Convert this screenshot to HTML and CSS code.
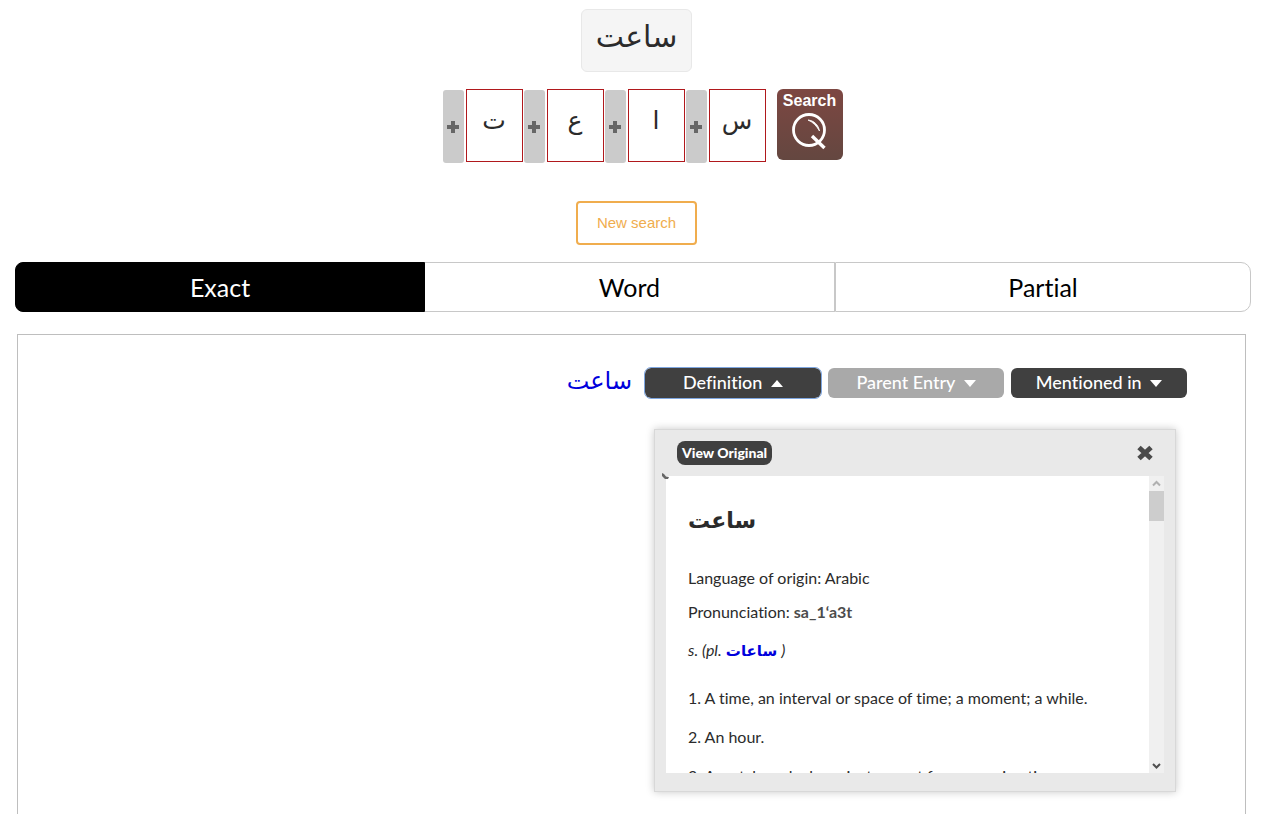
FILE: index.html
```
<!DOCTYPE html>
<html lang="en">
<head>
<meta charset="utf-8">
<title>Dictionary search</title>
<link rel="stylesheet" href="styles.css">
</head>
<body>
<header class="search">
  <h1 class="search-word" lang="ur" dir="rtl">ساعت</h1>
  <form class="letters">
    <button class="plus" type="button" aria-label="Add letter at end"><svg width="12" height="12" viewBox="0 0 12 12"><path d="M6 0v12M0 6h12"/></svg></button>
    <input class="letter" type="text" dir="rtl" aria-label="Letter 4" value="ت">
    <button class="plus" type="button" aria-label="Add letter before 4"><svg width="12" height="12" viewBox="0 0 12 12"><path d="M6 0v12M0 6h12"/></svg></button>
    <input class="letter" type="text" dir="rtl" aria-label="Letter 3" value="ع">
    <button class="plus" type="button" aria-label="Add letter before 3"><svg width="12" height="12" viewBox="0 0 12 12"><path d="M6 0v12M0 6h12"/></svg></button>
    <input class="letter" type="text" dir="rtl" aria-label="Letter 2" value="ا">
    <button class="plus" type="button" aria-label="Add letter before 2"><svg width="12" height="12" viewBox="0 0 12 12"><path d="M6 0v12M0 6h12"/></svg></button>
    <input class="letter" type="text" dir="rtl" aria-label="Letter 1" value="س">
    <button class="go" type="button">
      <span>Search</span>
      <svg width="38" height="40" viewBox="0 0 38 40" fill="none" stroke="#fff"><circle cx="18" cy="20" r="15.500" stroke-width="2.800"/><path d="M21 26 33.500 38" stroke-width="3.400"/><path d="M17 10c6 .5 10.500 5 11.500 11-3-5-6-8.500-11.500-11z" fill="#fff" stroke-width=".8"/></svg>
    </button>
  </form>
  <button class="new-search" type="button">New search</button>
</header>
<main>
  <nav class="tabs">
    <button class="tab tab-active" type="button">Exact</button>
    <button class="tab" type="button">Word</button>
    <button class="tab" type="button">Partial</button>
  </nav>
  <section class="results">
    <div class="entry">
      <a class="entry-word" href="#" lang="ur" dir="rtl">ساعت</a>
      <button class="action action-open" type="button">Definition <svg width="12" height="7" viewBox="0 0 12 7"><path d="M0 7 6 0l6 7z"/></svg></button>
      <button class="action action-off" type="button">Parent Entry <svg width="12" height="7" viewBox="0 0 12 7"><path d="M0 0h12L6 7z"/></svg></button>
      <button class="action" type="button">Mentioned in <svg width="12" height="7" viewBox="0 0 12 7"><path d="M0 0h12L6 7z"/></svg></button>
    </div>
    <article class="popup">
      <div class="popup-head">
        <button class="original" type="button">View Original</button>
        <button class="close" type="button" aria-label="Close"><svg width="16" height="16" viewBox="0 0 16 16"><path d="M2 2.500l12 11M14 2.500l-12 11"/></svg></button>
      </div>
      <div class="frame">
        <svg class="notch" width="8" height="7" viewBox="0 0 8 7"><path d="M0 0 2 1 4 3.500 7 4 6 6H3L0 3z"/></svg>
        <div class="definition">
          <h2 class="headword" lang="ur"><bdi>ساعت</bdi></h2>
          <p class="line">Language of origin: Arabic</p>
          <p class="line">Pronunciation: <b class="sound">sa_1‘a3t</b></p>
          <p class="grammar"><i>s. (pl.</i> <a class="plural" href="#" lang="ur"><bdi>ساعات</bdi></a> <i>)</i></p>
          <p class="sense">1. A time, an interval or space of time; a moment; a while.</p>
          <p class="sense">2. An hour.</p>
          <p class="sense">3. A watch, a clock; an instrument for measuring time.</p>
        </div>
        <div class="scroll" aria-hidden="true">
          <svg class="arrow-up" width="15" height="15" viewBox="0 0 15 15"><path d="M4 9.500 7.500 6 11 9.500"/></svg>
          <div class="thumb"></div>
          <svg class="arrow-down" width="15" height="15" viewBox="0 0 15 15"><path d="M4 6 7.500 9.500 11 6"/></svg>
        </div>
      </div>
    </article>
  </section>
</main>
</body>
</html>
```
FILE: styles.css
```
* { box-sizing: border-box; }
html { height: 100%; }
body {
  height: 100%;
  margin: 0;
  padding: 9px 16px 0 15px;
  display: flex;
  flex-direction: column;
  overflow: hidden;
  background: #fff;
  color: #2b2b2b;
  font-family: Lato, "DejaVu Sans", sans-serif;
  font-variant-ligatures: no-common-ligatures;
}
button { margin: 0; padding: 0; border: 0; font-family: inherit; font-variant-ligatures: inherit; cursor: pointer; }
h1, h2, p { margin: 0; }
a { text-decoration: none; color: #0000dc; }

.search {
  display: flex;
  flex-direction: column;
  align-items: center;
  padding-left: 7px;
}
.search-word {
  min-width: 110px;
  height: 63px;
  padding: 0 14px;
  border: 1px solid #e8e8e8;
  border-radius: 6px;
  background: #f5f5f5;
  font: 30px/54px "DejaVu Sans", sans-serif;
  text-align: center;
}
.letters {
  display: flex;
  align-items: flex-start;
  gap: 1px;
  margin: 17px 0 0 12px;
}
.plus {
  display: flex;
  align-items: center;
  justify-content: center;
  width: 21px;
  height: 73px;
  margin-top: 1px;
  border-radius: 3px;
  background: #cbcbcb;
}
.plus svg { fill: none; stroke: #666; stroke-width: 4; }
.letter {
  width: 57px;
  height: 73px;
  margin: 0 0 0 1px;
  padding: 0 4px 10px;
  border: 1px solid #b0181c;
  background: #fff;
  color: #2b2b2b;
  font: 25px "DejaVu Sans", sans-serif;
  text-align: center;
}
.go {
  display: flex;
  flex-direction: column;
  align-items: center;
  width: 66px;
  height: 71px;
  margin-left: 10px;
  padding-top: 2px;
  border-radius: 6px;
  background: linear-gradient(#7d4742, #644740);
  color: #fff;
  font: bold 16px/19px "Liberation Sans", sans-serif;
}
.new-search {
  height: 44px;
  margin-top: 38px;
  padding: 0 19px 2px;
  border: 2px solid #f0ad4e;
  border-radius: 4px;
  background: #fff;
  color: #f0ad4e;
  font: 15px "Liberation Sans", sans-serif;
}

main { flex: 1; display: flex; flex-direction: column; min-height: 0; margin-top: 17px; }
.tabs { display: grid; grid-template-columns: 410fr 410fr 416fr; }
.tab {
  height: 50px;
  border: 1px solid #c8c8c8;
  background: #fff;
  color: #000;
  font-size: 25px;
}
.tab:first-child { border-radius: 8px 0 0 8px; }
.tab:nth-child(2) { border-left: 0; }
.tab:last-child { border-radius: 0 10px 10px 0; }
.tab-active { background: #000; border-color: #000; color: #fff; }

.results {
  flex: 1;
  margin: 22px 5px 0 2px;
  padding: 33px 58px 0 24px;
  border: 1px solid #bebebe;
  border-bottom: 0;
}
.entry { display: flex; justify-content: flex-end; gap: 7px; }
.entry-word { margin-right: 6px; font: 24px/26px "DejaVu Sans", sans-serif; }
.action {
  width: 176px;
  height: 30px;
  padding-bottom: 2px;
  border-radius: 6px;
  background: #404040;
  color: #fff;
  font-size: 18px;
  font-weight: 500;
}
.action svg { margin: 0 0 2px 4px; fill: #fff; }
.action-open { outline: 1px solid #7ea6e0; }
.action-off { background: #a9a9a9; }

.popup {
  width: 522px;
  margin: 31px 11px 0 auto;
  padding: 11px 11px 18px;
  border: 1px solid #d8d8d8;
  background: #e9e9e9;
  box-shadow: 0 0 8px rgba(0, 0, 0, .22);
}
.popup-head { display: flex; justify-content: space-between; align-items: center; padding: 0 11px; }
.original {
  height: 24px;
  padding: 0 5px 2px;
  border-radius: 8px;
  background: #404040;
  color: #fff;
  font-size: 14px;
  font-weight: 900;
}
.close { height: 16px; background: none; }
.close svg { display: block; fill: none; stroke: #4a4a4a; stroke-width: 5; }
.frame { position: relative; display: flex; height: 297px; margin-top: 11px; background: #fff; }
.notch { position: absolute; left: -4px; top: -3px; fill: #666; }
.definition { flex: 1; overflow: hidden; padding: 23px 22px 0; font-size: 16px; }
.headword { margin-bottom: 18px; font: bold 22px/44px "DejaVu Sans", sans-serif; }
.line { line-height: 34px; }
.sound { color: #4c4c4c; }
.grammar { line-height: 42px; }
.plural { font: bold 15px "DejaVu Sans", sans-serif; }
.sense { line-height: 39px; }
.grammar + .sense { margin-top: 7px; }
.scroll { display: flex; flex-direction: column; width: 15px; background: #f0f0f0; }
.scroll svg { fill: none; stroke-width: 2; }
.arrow-up { stroke: #b0b0b0; }
.arrow-down { margin-top: auto; stroke: #505050; }
.thumb { height: 30px; background: #cdcdcd; }
```
